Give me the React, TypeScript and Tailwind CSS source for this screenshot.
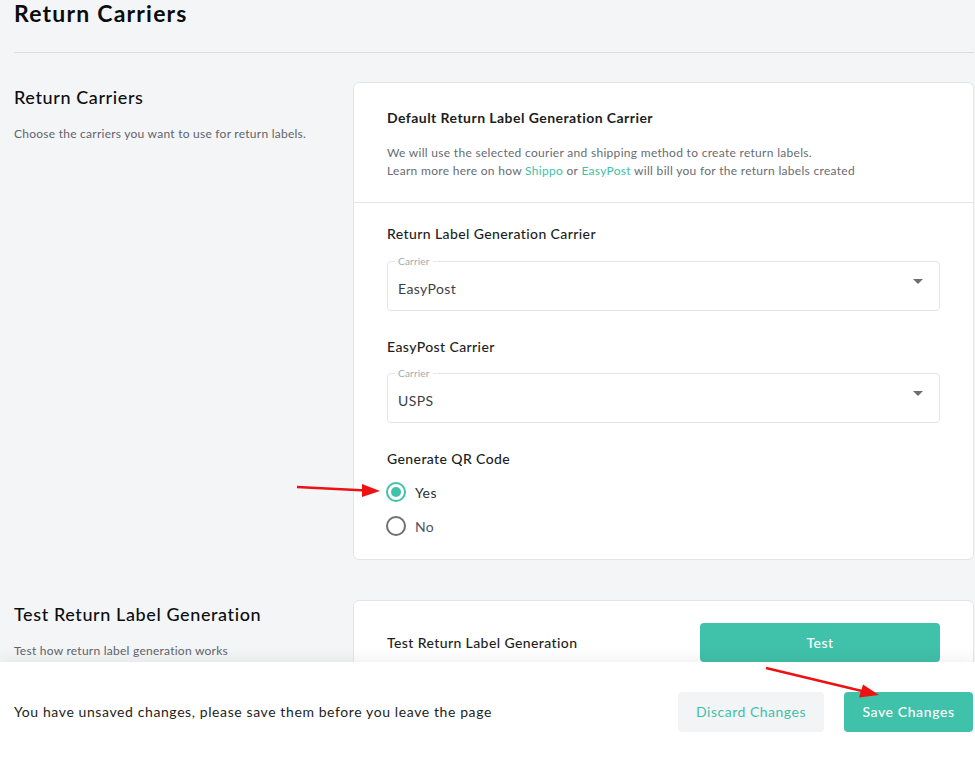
import React from "react";

function SelectField({ value }: { value: string }) {
  return (
    <div className="relative h-[50px] rounded-[4px] border border-[#e3e5e8] bg-white flex items-center pl-[10px] pr-[16px]">
      <span className="absolute -top-[7px] left-[7px] bg-white px-[3px] text-[10px] leading-[12px] tracking-[0.2px] text-[#a3a7ad]">
        Carrier
      </span>
      <span className="flex-1 text-[14px] tracking-[0.4px] text-[#3b3f45] pt-[5px]">{value}</span>
      <svg width="10" height="6" viewBox="0 0 10 6" className="mb-[8px]">
        <path d="M0 0 L10 0 L5 5 Z" fill="#6b6e72" />
      </svg>
    </div>
  );
}

function Radio({ checked, label }: { checked: boolean; label: string }) {
  return (
    <div className="flex items-center gap-[9px] h-[34px]">
      {checked ? (
        <span className="w-[20px] h-[20px] rounded-full border-2 border-[#40c1aa] flex items-center justify-center">
          <span className="w-[10px] h-[10px] rounded-full bg-[#40c1aa]" />
        </span>
      ) : (
        <span className="w-[20px] h-[20px] rounded-full border-2 border-[#707070]" />
      )}
      <span className={"text-[14px] tracking-[0.4px] " + (checked ? "text-[#2b2e33]" : "text-[#4b5563]")}>{label}</span>
    </div>
  );
}

export default function App() {
  return (
    <div
      className="relative w-[975px] h-[761px] overflow-hidden bg-[#f4f5f7]"
      style={{ fontFamily: "Lato, 'Open Sans', sans-serif" }}
    >
      <div className="pl-[14px] pr-[1px]">
        {/* Page title */}
        <div className="h-[53px] border-b border-[#d9dce2]">
          <h1 className="text-[23px] leading-[26px] font-bold tracking-[1.2px] text-[#0b0c0e]">Return Carriers</h1>
        </div>

        {/* Section 1 */}
        <div className="flex mt-[29px]">
          <div className="w-[339px] pt-[4px]">
            <h2 className="text-[18px] leading-[22px] font-medium tracking-[0.6px] text-[#0d0e10]">Return Carriers</h2>
            <p className="mt-[18px] text-[12px] leading-[16px] tracking-[0.25px] text-[#5f646b]">
              Choose the carriers you want to use for return labels.
            </p>
          </div>
          <div className="flex-1 bg-white rounded-[6px] border border-[#e3e5e8]">
            <div className="px-[33px] pt-[26px] pb-[22px] border-b border-[#e3e5e8]">
              <h3 className="text-[14px] leading-[18px] font-bold tracking-[0.45px] text-[#1c1e22]">
                Default Return Label Generation Carrier
              </h3>
              <p className="mt-[17px] text-[12px] leading-[18px] tracking-[0.3px] text-[#676c73]">
                We will use the selected courier and shipping method to create return labels.
                <br />
                Learn more here on how <span className="text-[#40c1aa]">Shippo</span> or{" "}
                <span className="text-[#40c1aa]">EasyPost</span> will bill you for the return labels created
              </p>
            </div>
            <div className="pl-[33px] pr-[33px] pt-[22px] pb-[16px]">
              <div className="text-[14px] leading-[18px] font-medium tracking-[0.4px] text-[#1c1e22]">Return Label Generation Carrier</div>
              <div className="mt-[18px]">
                <SelectField value="EasyPost" />
              </div>
              <div className="mt-[27px] text-[14px] leading-[18px] font-medium tracking-[0.4px] text-[#1c1e22]">EasyPost Carrier</div>
              <div className="mt-[17px]">
                <SelectField value="USPS" />
              </div>
              <div className="mt-[27px] text-[14px] leading-[18px] font-medium tracking-[0.4px] text-[#1c1e22]">Generate QR Code</div>
              <div className="mt-[7px] -ml-[1px]">
                <Radio checked label="Yes" />
                <Radio checked={false} label="No" />
              </div>
            </div>
          </div>
        </div>

        {/* Section 2 */}
        <div className="flex mt-[40px]">
          <div className="w-[339px] pt-[3px]">
            <h2 className="text-[18px] leading-[22px] font-medium tracking-[0.6px] text-[#0d0e10]">Test Return Label Generation</h2>
            <p className="mt-[18px] text-[12px] leading-[16px] tracking-[0.25px] text-[#5f646b]">Test how return label generation works</p>
          </div>
          <div className="flex-1 h-[120px] bg-white rounded-[6px] border border-[#e3e5e8] px-[33px] pt-[22px]">
            <div className="flex items-center">
              <div className="flex-1 text-[14px] font-medium tracking-[0.4px] text-[#1c1e22]">Test Return Label Generation</div>
              <button className="w-[240px] h-[39px] rounded-[4px] bg-[#40c1aa] text-white text-[14px] font-medium tracking-[0.4px]">
                Test
              </button>
            </div>
          </div>
        </div>
      </div>

      {/* Unsaved changes bar */}
      <div className="absolute left-0 right-0 bottom-0 h-[99px] bg-white shadow-[0_-4px_14px_rgba(0,0,0,0.06)] flex items-center pl-[14px] pr-[2px]">
        <div className="flex-1 text-[14px] tracking-[0.6px] text-[#1c1e22]">
          You have unsaved changes, please save them before you leave the page
        </div>
        <button className="w-[146px] h-[40px] rounded-[4px] bg-[#f3f4f6] text-[#40c1aa] text-[14px] tracking-[0.5px]">
          Discard Changes
        </button>
        <button className="ml-[20px] w-[129px] h-[40px] rounded-[4px] bg-[#40c1aa] text-white text-[14px] font-medium tracking-[0.6px]">
          Save Changes
        </button>
      </div>

      {/* Annotation arrows */}
      <svg className="absolute inset-0 pointer-events-none" width="975" height="761" viewBox="0 0 975 761">
        <line x1="297" y1="487" x2="366" y2="490.4" stroke="#ee1111" strokeWidth="2.5" />
        <polygon points="380,491 362,484 362,497" fill="#ee1111" />
        <line x1="766" y1="668" x2="864" y2="691.5" stroke="#ee1111" strokeWidth="2.5" />
        <polygon points="879,695 863,684.5 859,697.5" fill="#ee1111" />
      </svg>
    </div>
  );
}
